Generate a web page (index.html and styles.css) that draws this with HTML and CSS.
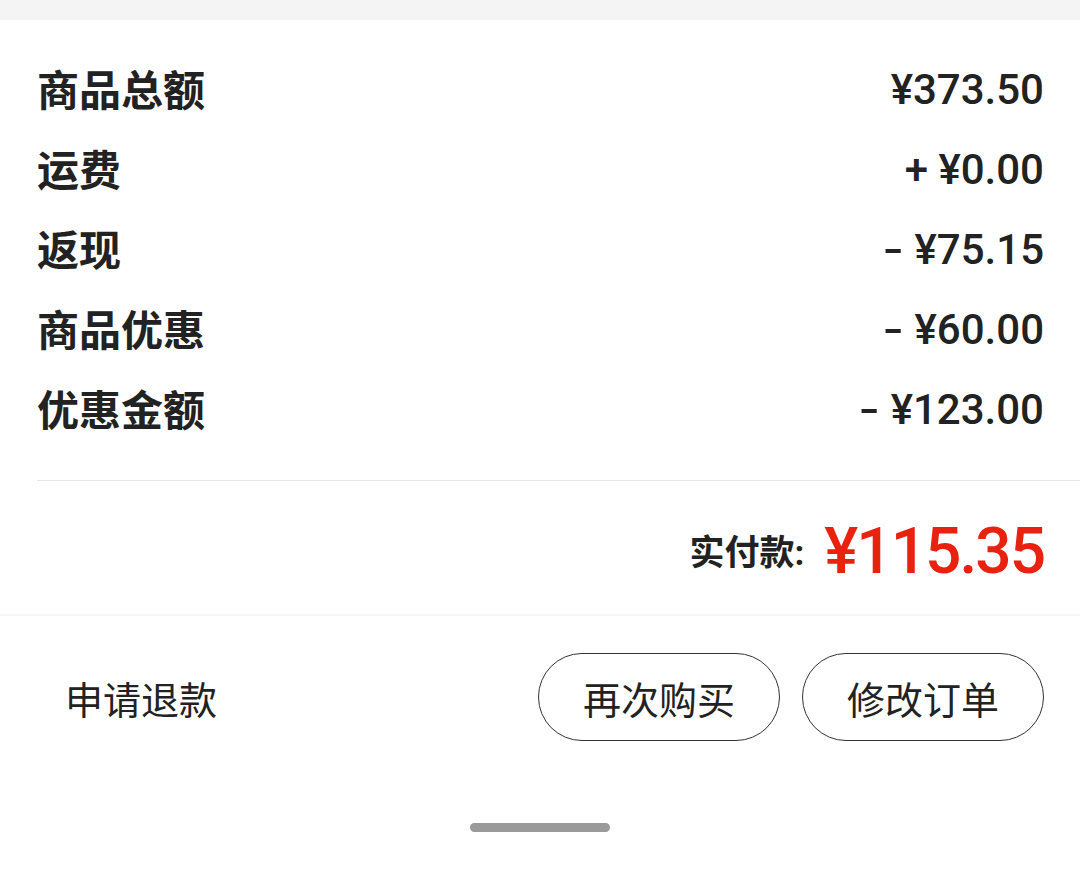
FILE: index.html
```html
<!DOCTYPE html>
<html lang="zh-CN">
<head>
    <meta charset="UTF-8">
    <meta name="viewport" content="width=device-width, initial-scale=1.0">
    <title>订单金额</title>
    <link rel="stylesheet" href="styles.css">
</head>
<body>
    <div class="topbar"></div>

    <!-- 金额明细 -->
    <div class="summary">
        <div class="rows">
            <div class="row"><span class="label">商品总额</span><span class="value">¥373.50</span></div>
            <div class="row"><span class="label">运费</span><span class="value">+ ¥0.00</span></div>
            <div class="row"><span class="label">返现</span><span class="value"><span class="sign">-</span>¥75.15</span></div>
            <div class="row"><span class="label">商品优惠</span><span class="value"><span class="sign">-</span>¥60.00</span></div>
            <div class="row"><span class="label">优惠金额</span><span class="value"><span class="sign">-</span>¥123.00</span></div>
        </div>
        <div class="total">
            <span class="total-label">实付款:</span>
            <span class="total-value">¥115.35</span>
        </div>
    </div>

    <!-- 底部操作 -->
    <div class="actions">
        <span class="refund">申请退款</span>
        <div class="btns">
            <div class="btn">再次购买</div>
            <div class="btn">修改订单</div>
        </div>
    </div>

    <div class="home-bar"></div>
</body>
</html>
```

FILE: styles.css
```css
body {
    margin: 0;
    width: 1080px;
    height: 878px;
    background-color: #fff;
    font-family: Roboto, "Noto Sans CJK SC", sans-serif;
    color: #222;
    overflow: hidden;
}

.topbar {
    height: 20px;
    background-color: #f4f4f4;
}

/* 金额明细 */
.summary {
    padding-left: 37px;
    border-bottom: 2px solid #f5f5f5;
}

.rows {
    padding: 27px 36px 33px 0;
    border-bottom: 1px solid #e6e6e6;
}

.row {
    height: 80px;
    display: flex;
    align-items: center;
    justify-content: space-between;
}

.label {
    font-size: 42px;
    font-weight: 700;
}

.value {
    font-size: 42px;
    font-weight: 500;
    margin-top: 4px;
}

.sign {
    display: inline-block;
    transform: scaleX(1.4);
    margin: 0 14px 0 4px;
}

.total {
    height: 133px;
    padding-right: 36px;
    display: flex;
    align-items: center;
    justify-content: flex-end;
}

.total-label {
    font-size: 35px;
    font-weight: 700;
    margin-right: 20px;
    margin-top: 4px;
}

.total-value {
    font-size: 64px;
    font-weight: 500;
    color: #e8220f;
    letter-spacing: -2px;
    margin-top: 8px;
}

/* 底部操作 */
.actions {
    display: flex;
    align-items: center;
    justify-content: space-between;
    padding: 37px 36px 0 65px;
}

.refund {
    font-size: 38px;
}

.btns {
    display: flex;
    gap: 22px;
}

.btn {
    width: 240px;
    height: 86px;
    border: 1px solid #333;
    border-radius: 44px;
    display: flex;
    align-items: center;
    justify-content: center;
    font-size: 38px;
}

.home-bar {
    width: 140px;
    height: 9px;
    border-radius: 5px;
    background-color: #9a9a9a;
    margin: 82px auto 0;
}
```
